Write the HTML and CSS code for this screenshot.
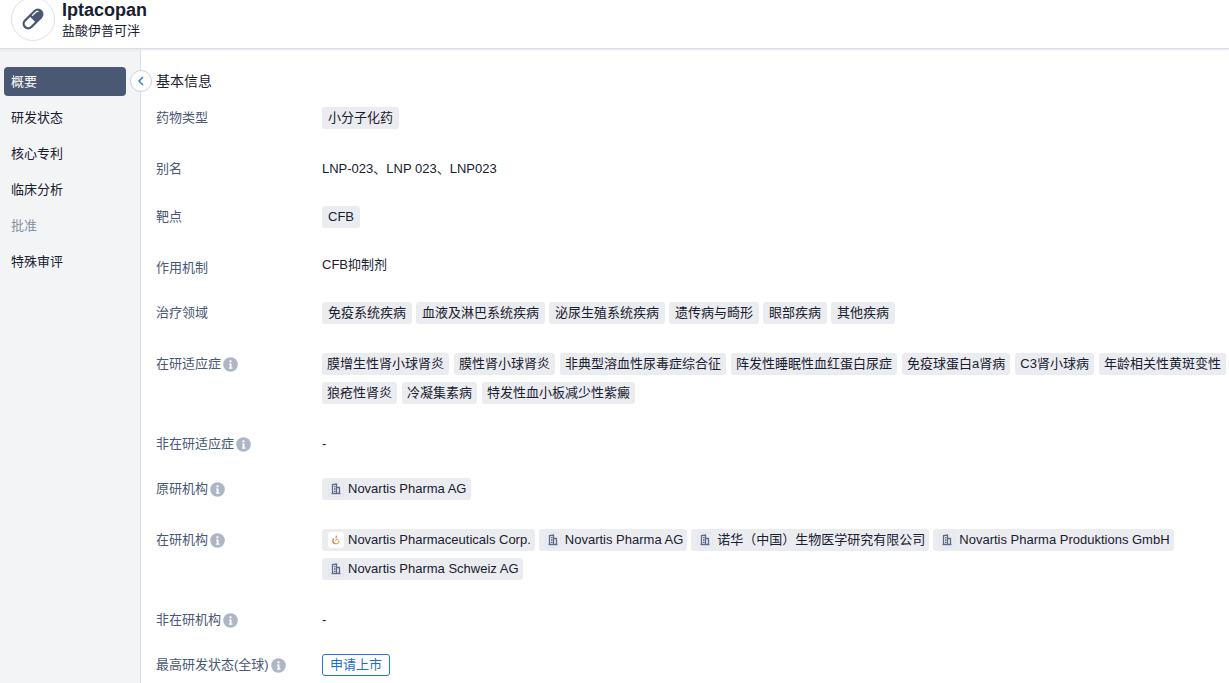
FILE: index.html
```html
<!DOCTYPE html>
<html lang="zh-CN">
<head>
<meta charset="utf-8">
<meta name="viewport" content="width=device-width, initial-scale=1">
<title>Iptacopan</title>
<link rel="stylesheet" href="styles.css">
</head>
<body>
<svg class="sprite" aria-hidden="true">
  <symbol id="info" viewBox="0 0 15 15">
    <circle cx="7.500" cy="7.500" r="7.300" fill="#aeb6c5"/>
    <rect x="6.500" y="3.300" width="2" height="2" fill="#fff"/>
    <path d="M6 6.400h2.500v4.200h1v1.100H6v-1.100h.7V7.500H6z" fill="#fff"/>
  </symbol>
  <symbol id="building" viewBox="0 0 16 16">
    <rect x=".5" y=".5" width="15" height="15" rx="3" fill="none" stroke="#e2e5eb"/>
    <path d="M4.500 12.500v-9l4-.5v9.500M8.500 6.500h3v6M3.500 12.500h9M6 5.700h1.500M6 8h1.500M6 10.300h1.500" fill="none" stroke="#5c6b88" stroke-width="1.300"/>
  </symbol>
  <symbol id="novartis" viewBox="0 0 16 16">
    <rect width="16" height="16" rx="3" fill="#fff"/>
    <path d="M8 3.500c.8 1 .4 2-.2 3.100" fill="none" stroke="#e8805a" stroke-width="1.200"/>
    <path d="M5.600 6.500c-1.600 2.300-.6 4.700 1.500 5.200" fill="none" stroke="#e2683c" stroke-width="1.300"/>
    <path d="M7 11.700c2.500.5 4.300-.8 3.900-3.200" fill="none" stroke="#efb23c" stroke-width="1.300"/>
    <path d="M7.300 8.800c.8-1.400 2.300-1.600 3.300-.8" fill="none" stroke="#8fa9c6"/>
  </symbol>
</svg>

<header class="header">
  <span class="avatar">
    <svg width="26" height="26" viewBox="0 0 24 24" aria-hidden="true">
      <g transform="rotate(-45 12 12)">
        <rect x="0.500" y="6.800" width="23" height="10.400" rx="5.200" fill="#4a5874"/>
        <path d="M11.500 8.800H5.900a3.200 3.200 0 0 0 0 6.400h5.600z" fill="#fff"/>
        <path d="M14 9.300h4.200a2.500 2.500 0 0 1 2 1" fill="none" stroke="#fff" stroke-width="1.200" stroke-linecap="round"/>
      </g>
    </svg>
  </span>
  <div>
    <h1 class="name">Iptacopan</h1>
    <p class="subname">盐酸伊普可泮</p>
  </div>
</header>

<div class="layout">
  <aside class="sidebar">
    <nav class="menu">
      <a class="menu-item menu-item-active" href="#overview" aria-current="page">概要</a>
      <a class="menu-item" href="#status">研发状态</a>
      <a class="menu-item" href="#patents">核心专利</a>
      <a class="menu-item" href="#clinical">临床分析</a>
      <a class="menu-item menu-item-disabled" href="#approval" aria-disabled="true">批准</a>
      <a class="menu-item" href="#review">特殊审评</a>
    </nav>
    <button class="collapse" type="button" aria-label="收起">
      <svg width="10" height="10" viewBox="0 0 10 10" aria-hidden="true"><path d="M7 1 3 5l4 4" fill="none" stroke="#2a7de1" stroke-width="1.500"/></svg>
    </button>
  </aside>

  <main class="content" id="overview">
    <h2 class="section-title">基本信息</h2>
    <dl class="facts">
      <div class="fact">
        <dt class="label">药物类型</dt>
        <dd class="value tags"><span class="tag">小分子化药</span></dd>
      </div>
      <div class="fact fact-alias">
        <dt class="label">别名</dt>
        <dd class="value">LNP-023、LNP 023、LNP023</dd>
      </div>
      <div class="fact">
        <dt class="label">靶点</dt>
        <dd class="value tags"><span class="tag">CFB</span></dd>
      </div>
      <div class="fact fact-text">
        <dt class="label">作用机制</dt>
        <dd class="value value-tight">CFB抑制剂</dd>
      </div>
      <div class="fact">
        <dt class="label">治疗领域</dt>
        <dd class="value tags">
          <span class="tag">免疫系统疾病</span>
          <span class="tag">血液及淋巴系统疾病</span>
          <span class="tag">泌尿生殖系统疾病</span>
          <span class="tag">遗传病与畸形</span>
          <span class="tag">眼部疾病</span>
          <span class="tag">其他疾病</span>
        </dd>
      </div>
      <div class="fact">
        <dt class="label">在研适应症<svg class="info"><use href="#info"/></svg></dt>
        <dd class="value tags tags-dense">
          <span class="tag">膜增生性肾小球肾炎</span>
          <span class="tag">膜性肾小球肾炎</span>
          <span class="tag">非典型溶血性尿毒症综合征</span>
          <span class="tag">阵发性睡眠性血红蛋白尿症</span>
          <span class="tag">免疫球蛋白a肾病</span>
          <span class="tag">C3肾小球病</span>
          <span class="tag">年龄相关性黄斑变性</span>
          <span class="tag">狼疮性肾炎</span>
          <span class="tag">冷凝集素病</span>
          <span class="tag">特发性血小板减少性紫癜</span>
        </dd>
      </div>
      <div class="fact fact-text">
        <dt class="label">非在研适应症<svg class="info"><use href="#info"/></svg></dt>
        <dd class="value">-</dd>
      </div>
      <div class="fact">
        <dt class="label">原研机构<svg class="info"><use href="#info"/></svg></dt>
        <dd class="value tags">
          <span class="tag tag-org"><svg class="org"><use href="#building"/></svg>Novartis Pharma AG</span>
        </dd>
      </div>
      <div class="fact">
        <dt class="label">在研机构<svg class="info"><use href="#info"/></svg></dt>
        <dd class="value tags">
          <span class="tag tag-org"><svg class="org"><use href="#novartis"/></svg>Novartis Pharmaceuticals Corp.</span>
          <span class="tag tag-org"><svg class="org"><use href="#building"/></svg>Novartis Pharma AG</span>
          <span class="tag tag-org"><svg class="org"><use href="#building"/></svg>诺华（中国）生物医学研究有限公司</span>
          <span class="tag tag-org"><svg class="org"><use href="#building"/></svg>Novartis Pharma Produktions GmbH</span>
          <span class="tag tag-org"><svg class="org"><use href="#building"/></svg>Novartis Pharma Schweiz AG</span>
        </dd>
      </div>
      <div class="fact fact-text">
        <dt class="label">非在研机构<svg class="info"><use href="#info"/></svg></dt>
        <dd class="value">-</dd>
      </div>
      <div class="fact">
        <dt class="label">最高研发状态(全球)<svg class="info"><use href="#info"/></svg></dt>
        <dd class="value tags"><span class="tag tag-status">申请上市</span></dd>
      </div>
    </dl>
  </main>
</div>
</body>
</html>
```
FILE: styles.css
```css
* {
  box-sizing: border-box;
}

body {
  margin: 0;
  min-height: 100vh;
  display: flex;
  flex-direction: column;
  background: #fff;
  color: #18202f;
  font: 13px/22px "Liberation Sans", "Noto Sans CJK SC", sans-serif;
}

h1, h2, p, dl, dd {
  margin: 0;
}

.sprite {
  display: none;
}

.header {
  display: flex;
  gap: 7px;
  height: 49px;
  padding-left: 11px;
  border-bottom: 1px solid #dcdee5;
  box-shadow: 0 1px 2px #e4e6eb;
  z-index: 1;
}

.avatar {
  display: grid;
  place-items: center;
  width: 44px;
  height: 44px;
  margin-top: -3px;
  border: 1px solid #dfe1e8;
  border-radius: 50%;
}

.name {
  font-size: 18px;
  line-height: 20px;
}

.subname {
  line-height: 22px;
}

.layout {
  flex: 1;
  display: flex;
}

.sidebar {
  position: relative;
  flex: none;
  width: 141px;
  padding: 18px 14px 0 4px;
  border-right: 1px solid #dcdee5;
  background: #f3f4f6;
}

.menu {
  display: flex;
  flex-direction: column;
  gap: 7px;
}

.menu-item {
  padding: 0 7px;
  border-radius: 4px;
  color: #18202f;
  line-height: 29px;
  text-decoration: none;
}

.menu-item-active {
  background: #4a5874;
  color: #fff;
}

.menu-item-disabled {
  color: #8790a3;
}

.collapse {
  position: absolute;
  top: 21px;
  right: -12px;
  display: grid;
  place-items: center;
  width: 22px;
  height: 22px;
  padding: 0;
  border: 1px solid #cdd1da;
  border-radius: 50%;
  background: #fff;
}

.content {
  flex: 1;
  min-width: 0;
  padding: 21px 0 0 15px;
}

.section-title {
  margin-bottom: 15px;
  font-size: 14px;
  font-weight: 400;
}

.fact {
  display: grid;
  grid-template-columns: 166px 1fr;
  margin-bottom: 29px;
}

.fact-alias {
  margin-bottom: 26px;
}

.fact-text {
  margin-bottom: 23px;
}

.fact:last-child {
  margin-bottom: 0;
}

.label {
  display: flex;
  align-items: center;
  gap: 2px;
  height: 22px;
  color: #4a5874;
}

.info {
  width: 15px;
  height: 15px;
}

.value-tight {
  line-height: 16px;
}

.tags {
  display: flex;
  flex-wrap: wrap;
  gap: 7px 4px;
}

.tag {
  padding: 0 6px;
  border-radius: 3px;
  background: #ebecf0;
}

.tags-dense {
  column-gap: 5px;
}

.tags-dense .tag {
  padding: 0 5px;
}

.tag-org {
  display: flex;
  align-items: center;
  gap: 4px;
  padding: 0 4px 0 6px;
}

.org {
  width: 16px;
  height: 16px;
}

.tag-status {
  padding: 0 7px;
  border: 1px solid #2175d9;
  background: #fff;
  color: #1c6dd0;
  line-height: 20px;
}
```
